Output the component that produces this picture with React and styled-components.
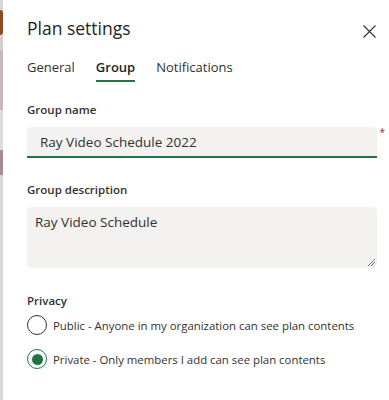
import React from "react";
import styled, { createGlobalStyle } from "styled-components";

const Global = createGlobalStyle`
  html, body { margin: 0; padding: 0; background: #fff; }
  body { font-family: "Open Sans", "Noto Sans", sans-serif; color: #323130; }
`;

const Page = styled.div`
  display: flex;
  width: 389px;
  height: 400px;
  overflow: hidden;
  background: #fff;
`;

const Backdrop = styled.div`
  width: 3px;
  flex: none;
  display: flex;
  flex-direction: column;
  background: #d6d6d6;
`;

const Strip = styled.div`
  height: ${(p) => p.h}px;
  background: ${(p) => p.c};
  border-radius: ${(p) => (p.round ? "0 12px 12px 0" : "0")};
`;

const Panel = styled.div`
  flex: 1;
  display: flex;
  flex-direction: column;
  padding: 12px 0 0 24px;
`;

const Header = styled.div`
  display: flex;
  align-items: center;
  justify-content: space-between;
  padding-right: 13px;
  height: 32px;
`;

const Title = styled.h1`
  margin: 0;
  font-size: 17.5px;
  font-weight: 400;
  color: #201f1e;
`;

const Close = styled.button`
  border: 0;
  background: none;
  padding: 0;
  width: 13px;
  height: 13px;
  display: flex;
  align-items: center;
  justify-content: center;
  margin-top: 6px;
`;

const Tabs = styled.div`
  display: flex;
  gap: 21px;
  margin-top: 14px;
`;

const Tab = styled.div`
  font-size: 13px;
  color: ${(p) => (p.active ? "#201f1e" : "#323130")};
  font-weight: ${(p) => (p.active ? 600 : 400)};
  padding-bottom: 4px;
  border-bottom: 2px solid ${(p) => (p.active ? "#217346" : "transparent")};
`;

const Field = styled.div`
  display: flex;
  flex-direction: column;
  margin-right: 12px;
`;

const Label = styled.div`
  font-size: 11.5px;
  font-weight: 600;
  color: #323130;
  margin: ${(p) => p.m};
`;

const InputWrap = styled.div`
  position: relative;
`;

const Input = styled.div`
  height: 29px;
  background: #f3f2f1;
  border-radius: 4px 4px 0 0;
  border-bottom: 2px solid #217346;
  font-size: 13.5px;
  display: flex;
  align-items: center;
  padding-left: 13px;
  color: #323130;
`;

const Required = styled.span`
  position: absolute;
  right: -8px;
  top: -2px;
  color: #a4262c;
  font-size: 10px;
`;

const TextArea = styled.div`
  position: relative;
  height: 49px;
  background: #f3f2f1;
  border-radius: 4px;
  font-size: 13.5px;
  padding: 6px 8px;
  color: #323130;
`;

const Grip = styled.svg`
  position: absolute;
  right: 1px;
  bottom: 1px;
`;

const Radios = styled.div`
  display: flex;
  flex-direction: column;
  gap: 14px;
  margin-top: 7px;
`;

const Radio = styled.label`
  display: flex;
  align-items: center;
  gap: 6px;
  font-size: 11.4px;
  white-space: nowrap;
  color: #323130;
`;

const Circle = styled.span`
  flex: none;
  width: 20px;
  height: 20px;
  border-radius: 50%;
  box-sizing: border-box;
  border: 1.3px solid ${(p) => (p.checked ? "#217346" : "#323130")};
  display: flex;
  align-items: center;
  justify-content: center;
  &::after {
    content: "";
    width: 11px;
    height: 11px;
    border-radius: 50%;
    background: ${(p) => (p.checked ? "#217346" : "transparent")};
  }
`;

export default function App() {
  return (
    <>
      <Global />
      <Page>
        <Backdrop>
          <Strip h={10} c="#d8d8d8" />
          <Strip h={25} c="#8a4a22" round />
          <Strip h={15} c="#d4cfd2" />
          <Strip h={60} c="#c9b8c0" />
          <Strip h={40} c="#dcdcdc" />
          <Strip h={25} c="#a98a97" />
          <Strip h={225} c="#d6d6d6" />
        </Backdrop>
        <Panel>
          <Header>
            <Title>Plan settings</Title>
            <Close aria-label="Close">
              <svg width="13" height="13" viewBox="0 0 13 13">
                <path d="M0.5 0.5L12.5 12.5M12.5 0.5L0.5 12.5" stroke="#323130" strokeWidth="1.1" />
              </svg>
            </Close>
          </Header>
          <Tabs>
            <Tab>General</Tab>
            <Tab active>Group</Tab>
            <Tab>Notifications</Tab>
          </Tabs>
          <Field>
            <Label m="20px 0 10px">Group name</Label>
            <InputWrap>
              <Input>Ray Video Schedule 2022</Input>
              <Required>*</Required>
            </InputWrap>
            <Label m="24px 0 10px">Group description</Label>
            <TextArea>
              Ray Video Schedule
              <Grip width="10" height="10" viewBox="0 0 10 10">
                <path d="M9 2L2 9M9 5L5 9" stroke="#605e5c" strokeWidth="0.9" />
              </Grip>
            </TextArea>
            <Label m="25px 0 0">Privacy</Label>
            <Radios>
              <Radio>
                <Circle />
                Public - Anyone in my organization can see plan contents
              </Radio>
              <Radio>
                <Circle checked />
                Private - Only members I add can see plan contents
              </Radio>
            </Radios>
          </Field>
        </Panel>
      </Page>
    </>
  );
}
